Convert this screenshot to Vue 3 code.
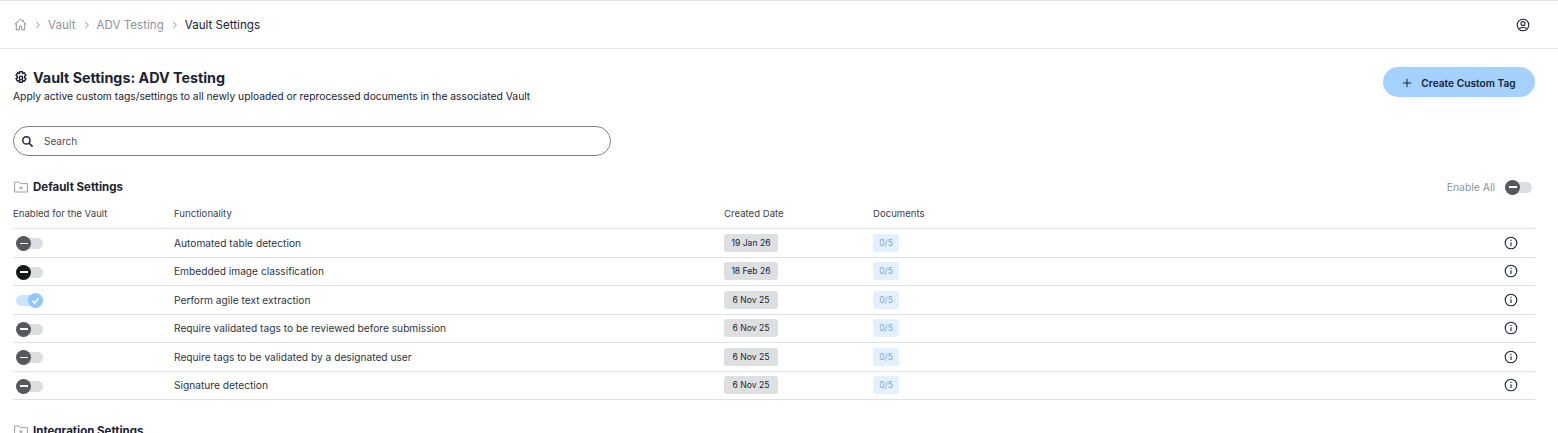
<template>
  <div class="page">
    <header class="topbar">
      <nav class="crumbs">
        <svg class="home" viewBox="0 0 16 16" fill="none" stroke="#7f858d" stroke-width="1.1">
          <path d="M.8 8 8 1.4 15.2 8M2.8 6.4v8.2h3.8V10h2.8v4.6h3.8V6.4M11.4 2.2v2.4" />
        </svg>
        <template v-for="c in crumbs" :key="c.label">
          <svg class="chev" viewBox="0 0 8 8" fill="none" stroke="#8d939b" stroke-width="1"><path d="M2.2 1 5.4 4 2.2 7" /></svg>
          <span class="crumb" :class="{ current: c.current }">{{ c.label }}</span>
        </template>
      </nav>
      <svg class="user" viewBox="0 0 14 14" fill="none" stroke="#1b2230" stroke-width="1.1">
        <circle cx="7" cy="7" r="5.8" />
        <circle cx="7" cy="5.6" r="2" />
        <path d="M3.4 10.6c1-1.4 6.2-1.4 7.2 0" />
      </svg>
    </header>

    <main class="content">
      <section class="title-row">
        <div>
          <h1>
            <svg class="gear" viewBox="0 0 14 14" fill="none" stroke="#1b2230" stroke-width="1.4">
              <path d="M5.6.8h2.8l.4 1.7 1.7-.6 1.4 2.4-1.3 1.1v1.2l1.3 1.1-1.4 2.4-1.7-.6-.4 1.7H5.6l-.4-1.7-1.7.6-1.4-2.4 1.3-1.1V5.4L2.1 4.3l1.4-2.4 1.7.6z" />
              <circle cx="7" cy="7" r="1.7" />
            </svg>
            Vault Settings: ADV Testing
          </h1>
          <p class="subtitle">Apply active custom tags/settings to all newly uploaded or reprocessed documents in the associated Vault</p>
        </div>
        <button class="create">
          <svg viewBox="0 0 12 12" fill="none" stroke="#14233c" stroke-width="1.2"><path d="M6 1v10M1 6h10" /></svg>
          Create Custom Tag
        </button>
      </section>

      <div class="search">
        <svg viewBox="0 0 14 14" fill="none" stroke="#1b2230" stroke-width="1.6">
          <circle cx="5.8" cy="5.8" r="3.9" />
          <path d="m8.8 8.8 3.7 3.7" />
        </svg>
        <span>Search</span>
      </div>

      <div class="group-head">
        <h2>
          <svg class="folder" viewBox="0 0 14 12" fill="none" stroke="#8d939b" stroke-width="0.9">
            <path d="M.6 11V1h4.6l1.2 1.6h7V11z" />
            <path d="M7 5.2v3.4M5.3 6.9h3.4" />
          </svg>
          Default Settings
        </h2>
        <div class="enable-all">
          <span>Enable All</span>
          <span class="toggle">
            <span class="knob"><i></i></span>
          </span>
        </div>
      </div>

      <div class="row head">
        <span>Enabled for the Vault</span>
        <span>Functionality</span>
        <span>Created Date</span>
        <span>Documents</span>
      </div>
      <div v-for="r in rows" :key="r.name" class="row">
        <span>
          <span class="toggle" :class="{ on: r.on, dark: r.dark }">
            <span class="knob">
              <svg v-if="r.on" viewBox="0 0 10 10" fill="none" stroke="#fff" stroke-width="1.5"><path d="m2.2 5.2 2 2 3.6-4.2" /></svg>
              <i v-else></i>
            </span>
          </span>
        </span>
        <span class="name">{{ r.name }}</span>
        <span><span class="date">{{ r.date }}</span></span>
        <span><span class="docs">0/5</span></span>
        <svg class="info" viewBox="0 0 14 14" fill="none" stroke="#1b2230" stroke-width="1.1">
          <circle cx="7" cy="7" r="5.8" />
          <path d="M7 6.2v3.8M7 3.8v1.1" />
        </svg>
      </div>

      <h2 class="next-group">
        <svg class="folder" viewBox="0 0 14 12" fill="none" stroke="#8d939b" stroke-width="0.9">
          <path d="M.6 11V1h4.6l1.2 1.6h7V11z" />
          <path d="M7 5.2v3.4M5.3 6.9h3.4" />
        </svg>
        Integration Settings
      </h2>
    </main>
  </div>
</template>

<script setup>
const crumbs = [
  { label: 'Vault' },
  { label: 'ADV Testing' },
  { label: 'Vault Settings', current: true }
]

const rows = [
  { name: 'Automated table detection', date: '19 Jan 26' },
  { name: 'Embedded image classification', date: '18 Feb 26', dark: true },
  { name: 'Perform agile text extraction', date: '6 Nov 25', on: true },
  { name: 'Require validated tags to be reviewed before submission', date: '6 Nov 25' },
  { name: 'Require tags to be validated by a designated user', date: '6 Nov 25' },
  { name: 'Signature detection', date: '6 Nov 25' }
]
</script>

<style>
html, body {
  margin: 0;
  background: #fff;
  overflow: hidden;
}
</style>

<style scoped>
.page {
  height: 433px;
  overflow: hidden;
  font-family: Inter, "Liberation Sans", sans-serif;
  color: #1b2230;
  border-top: 1px solid #e3e3e6;
  box-sizing: border-box;
}

.topbar {
  height: 47px;
  border-bottom: 1px solid #e3e3ea;
  display: flex;
  align-items: center;
  justify-content: space-between;
  padding: 0 28px 0 14px;
}

.crumbs {
  display: flex;
  align-items: center;
  font-size: 11.6px;
}

.home {
  width: 13px;
  height: 13px;
}

.chev {
  width: 8px;
  height: 8px;
  margin: 0 6px 0 7px;
}

.crumb {
  color: #8d939b;
}

.crumb.current {
  color: #1b2230;
}

.user {
  width: 14px;
  height: 14px;
}

.content {
  padding: 0 23px 0 13px;
}

.title-row {
  display: flex;
  justify-content: space-between;
  align-items: flex-start;
  padding-top: 19px;
}

h1 {
  margin: 0;
  font-size: 14.3px;
  line-height: 20px;
  font-weight: 700;
  display: flex;
  align-items: center;
  gap: 5px;
  padding-left: 1px;
}

.gear {
  width: 14px;
  height: 14px;
}

.subtitle {
  margin: 1px 0 0;
  font-size: 10.3px;
  line-height: 14px;
}

.create {
  width: 152px;
  height: 30px;
  margin-top: -1px;
  padding: 1px 0 0;
  border: 0;
  border-radius: 15px;
  background: #a5d1fd;
  color: #14233c;
  font: 600 10.2px Inter, "Liberation Sans", sans-serif;
  display: flex;
  align-items: center;
  justify-content: center;
  gap: 9px;
}

.create svg {
  width: 10px;
  height: 10px;
}

.search {
  box-sizing: border-box;
  width: 598px;
  height: 30px;
  margin-top: 23px;
  border: 1px solid #7d8288;
  border-radius: 15px;
  display: flex;
  align-items: center;
  gap: 10px;
  padding-left: 7px;
  font-size: 10px;
  color: #4a5058;
}

.search svg {
  width: 13px;
  height: 13px;
}

.group-head {
  display: flex;
  justify-content: space-between;
  align-items: center;
  margin-top: 22px;
  height: 18px;
}

h2 {
  margin: 0;
  font-size: 11.5px;
  font-weight: 700;
  display: flex;
  align-items: center;
  gap: 5px;
  padding-left: 1px;
}

.folder {
  width: 14px;
  height: 12px;
}

.enable-all {
  display: flex;
  align-items: center;
  gap: 7px;
  font-size: 10.4px;
  color: #8d939b;
  padding-right: 3px;
}

.row {
  display: grid;
  grid-template-columns: 161px 550px 149px 1fr 31px;
  align-items: center;
  height: 28.5px;
  box-sizing: border-box;
  border-bottom: 1px solid #dfe0e3;
  font-size: 10.2px;
}

.row.head {
  grid-template-columns: 161px 550px 149px 1fr;
  margin-top: 3px;
  height: 30px;
  font-size: 9.6px;
  color: #3b4149;
}

.name {
  color: #2e343c;
}

.toggle {
  position: relative;
  display: inline-block;
  width: 27px;
  height: 11px;
  margin-left: 3px;
  vertical-align: middle;
  border-radius: 6px;
  background: #dcdde0;
}

.knob {
  position: absolute;
  left: 0;
  top: -2px;
  width: 15px;
  height: 15px;
  border-radius: 50%;
  background: #55585c;
  display: flex;
  align-items: center;
  justify-content: center;
}

.knob i {
  width: 8px;
  height: 1.5px;
  background: #fff;
}

.knob svg {
  width: 11px;
  height: 11px;
}

.toggle.dark .knob {
  background: #17181a;
}

.toggle.on {
  background: #cce4fe;
}

.toggle.on .knob {
  left: auto;
  right: 0;
  background: #92c7fb;
}

.date {
  display: inline-block;
  width: 54px;
  height: 18px;
  line-height: 18px;
  text-align: center;
  border-radius: 3px;
  background: #dedfe1;
  font-size: 8.6px;
}

.docs {
  display: inline-block;
  width: 26px;
  height: 18px;
  line-height: 18px;
  text-align: center;
  border-radius: 3px;
  background: #e2f0ff;
  color: #7aa6d8;
  font-size: 8.6px;
}

.info {
  width: 14px;
  height: 14px;
}

.next-group {
  margin-top: 24px;
}
</style>
